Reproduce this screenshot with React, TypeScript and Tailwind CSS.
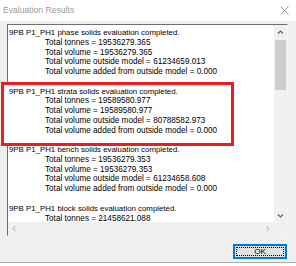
import React from 'react';

type Line = { text: string; indent?: boolean };

const blocks: { head: string; rows: string[] }[] = [
  {
    head: '9PB P1_PH1 phase solids evaluation completed.',
    rows: [
      'Total tonnes = 19536279.365',
      'Total volume = 19536279.365',
      'Total volume outside model = 61234659.013',
      'Total volume added from outside model = 0.000',
    ],
  },
  {
    head: '9PB P1_PH1 strata solids evaluation completed.',
    rows: [
      'Total tonnes = 19589580.977',
      'Total volume = 19589580.977',
      'Total volume outside model = 80788582.973',
      'Total volume added from outside model = 0.000',
    ],
  },
  {
    head: '9PB P1_PH1 bench solids evaluation completed.',
    rows: [
      'Total tonnes = 19536279.353',
      'Total volume = 19536279.353',
      'Total volume outside model = 61234658.608',
      'Total volume added from outside model = 0.000',
    ],
  },
  {
    head: '9PB P1_PH1 block solids evaluation completed.',
    rows: ['Total tonnes = 21458621.088'],
  },
];

const lines: Line[] = [];
blocks.forEach((b, i) => {
  if (i > 0) lines.push({ text: '' });
  lines.push({ text: b.head });
  b.rows.forEach(r => lines.push({ text: r, indent: true }));
});

const Chevron = ({ dir, color }: { dir: 'up' | 'down' | 'left' | 'right'; color: string }) => {
  const d = {
    up: 'M1 4.5 L3.5 2 L6 4.5',
    down: 'M1 2.5 L3.5 5 L6 2.5',
    left: 'M4.5 1 L2 3.5 L4.5 6',
    right: 'M2.5 1 L5 3.5 L2.5 6',
  }[dir];
  return (
    <svg width="7" height="7" viewBox="0 0 7 7">
      <path d={d} fill="none" stroke={color} strokeWidth="1.2" />
    </svg>
  );
};

const App: React.FC = () => {
  return (
    <div className="relative w-[296px] h-[266px] bg-white overflow-hidden" style={{ fontFamily: '"Liberation Sans", Arial, sans-serif' }}>
      <div className="w-full h-[263px] bg-[#f0f0f0] border-b border-[#a9a9a9] flex flex-col">
        {/* title bar */}
        <div className="h-[21px] bg-white flex items-center justify-between pl-[3px] pr-[7px]">
          <span className="text-[8.6px] text-[#9a9a9a] leading-none">Evaluation Results</span>
          <svg width="9" height="9" viewBox="0 0 9 9">
            <path d="M0.5 0.5 L8.5 8.5 M8.5 0.5 L0.5 8.5" stroke="#8a8a8a" strokeWidth="0.9" />
          </svg>
        </div>

        {/* results box */}
        <div className="pt-[3px] pl-[7px] pr-[8px]">
          <div className="h-[212px] bg-white border border-t-[#6e6e6e] border-l-[#6e6e6e] border-r-[#f4f4f4] border-b-[#f4f4f4] flex flex-col">
            <div className="flex flex-1 min-h-0">
              <div className="flex-1 overflow-hidden pt-[3px] pl-[1px]">
                <div className="relative z-10 leading-[9.78px] text-black whitespace-pre">
                  {lines.map((l, i) => (
                    <div key={i} className={l.indent ? 'pl-[36px] h-[9.78px] text-[8.16px]' : 'h-[9.78px] text-[7.85px]'}>
                      {l.text}
                    </div>
                  ))}
                </div>
              </div>
              <div className="w-[13px] bg-[#f0f0f0] flex flex-col items-center">
                <div className="h-[15px] flex items-center justify-center">
                  <Chevron dir="up" color="#606060" />
                </div>
                <div className="w-[11px] h-[50px] bg-[#cdcdcd]" />
                <div className="flex-1" />
                <div className="h-[14px] flex items-center justify-center">
                  <Chevron dir="down" color="#606060" />
                </div>
              </div>
            </div>
            <div className="h-[13px] flex">
              <div className="flex-1 bg-[#f0f0f0] flex items-center justify-between px-[3px]">
                <Chevron dir="left" color="#c4c4c4" />
                <Chevron dir="right" color="#c4c4c4" />
              </div>
              <div className="w-[13px] bg-[#f0f0f0]" />
            </div>
          </div>
        </div>

        {/* button row */}
        <div className="flex justify-end pr-[9px] pt-[8px]">
          <button className="w-[54px] h-[15px] bg-[#e1e1e1] border-2 border-[#0078d7] p-[1px] flex">
            <span className="flex-1 border border-dotted border-black flex items-center justify-center text-[8px] leading-none text-black">
              OK
            </span>
          </button>
        </div>
      </div>

      {/* annotation */}
      <div className="absolute left-[1px] top-[82px] w-[233px] h-[64px] border-[3px] border-[#ee1c1c] bg-white z-[5]" />
    </div>
  );
};

export default App;
